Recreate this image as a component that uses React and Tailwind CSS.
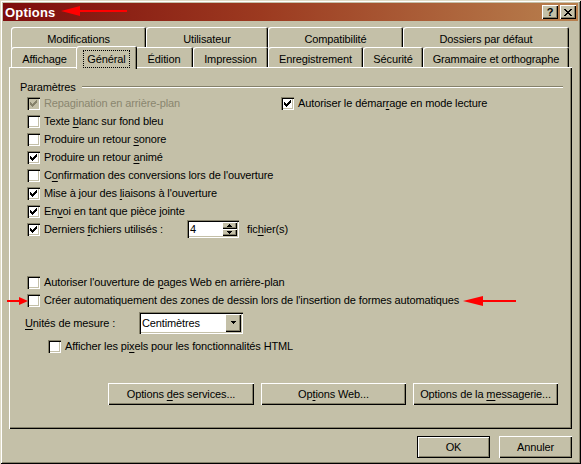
import React from 'react';

const raised = 'shadow-[inset_1px_1px_0_#fff,inset_-1px_-1px_0_#000,inset_-2px_-2px_0_#85816a]';
const sunken = 'shadow-[inset_1px_1px_0_#85816a,inset_2px_2px_0_#000,inset_-1px_-1px_0_#fff,inset_-2px_-2px_0_#c4c0a8]';

const U = ({ children }) => <span className="underline underline-offset-[2px]">{children}</span>;

const Check = ({ disabled }) => (
  <svg width="7" height="7" viewBox="0 0 7 7" shapeRendering="crispEdges" className="block">
    <path
      d="M0 2h1v3h-1zM1 3h1v3h-1zM2 4h1v3h-1zM3 3h1v3h-1zM4 2h1v3h-1zM5 1h1v3h-1zM6 0h1v3h-1z"
      fill={disabled ? '#85816a' : '#000'}
    />
  </svg>
);

const Box = ({ checked, disabled }) => (
  <span
    className={`w-[13px] h-[13px] shrink-0 flex items-center justify-center ${sunken} ${
      disabled ? 'bg-[#c4c0a8]' : 'bg-white'
    }`}
  >
    {checked && <Check disabled={disabled} />}
  </span>
);

const Row = ({ checked, disabled, children, className = '' }) => (
  <div className={`h-[18px] flex items-center gap-[4px] ${className}`}>
    <Box checked={checked} disabled={disabled} />
    <span className={disabled ? 'text-[#8a866f]' : 'text-black'}>{children}</span>
  </div>
);

const Btn = ({ children, className = '' }) => (
  <div className={`h-[22px] flex items-center justify-center bg-[#c4c0a8] ${raised} ${className}`}>
    <span>{children}</span>
  </div>
);

const Arrow = ({ dir }) => (
  <svg width="5" height="4" viewBox="0 0 5 4" shapeRendering="crispEdges" className="block">
    {dir === 'up' ? <path d="M2 0h1v1h1v1h1v1h-5v-1h1v-1h1z" /> : <path d="M0 0h5v1h-1v1h-1v1h-1v-1h-1v-1h-1z" />}
  </svg>
);

const backTabs = [
  { label: 'Modifications', w: 'w-[135px]' },
  { label: 'Utilisateur', w: 'w-[122px]' },
  { label: 'Compatibilité', w: 'w-[135px]' },
  { label: 'Dossiers par défaut', w: 'w-[166px]' },
];

const frontTabs = [
  { label: 'Affichage', w: 'w-[67px]' },
  { label: 'Général', w: 'w-[61px]', active: true },
  { label: 'Édition', w: 'w-[58px]' },
  { label: 'Impression', w: 'w-[75px]' },
  { label: 'Enregistrement', w: 'w-[95px]' },
  { label: 'Sécurité', w: 'w-[60px]' },
  { label: 'Grammaire et orthographe', w: 'w-[146px]' },
];

const tabShape =
  'rounded-tl-[3px] rounded-tr-[2px] shadow-[inset_1px_1px_0_#fff,inset_-1px_0_0_#000,inset_-2px_0_0_#85816a]';

export default function App() {
  return (
    <div className="relative w-[581px] h-[464px] bg-[#c4c0a8] p-[3px] text-[11px] leading-none tracking-[-0.12px] text-black font-['Liberation_Sans',Arial,sans-serif] shadow-[inset_1px_1px_0_#dfdbc6,inset_-1px_-1px_0_#000,inset_2px_2px_0_#fff,inset_-2px_-2px_0_#85816a] select-none">
      {/* Title bar */}
      <div className="h-[18px] flex items-center justify-between pl-[2px] pr-[2px] bg-[linear-gradient(90deg,#7e0c0c,#9c3a20_45%,#b8804e)]">
        <span className="text-white font-bold text-[13px] tracking-[0.2px]">Options</span>
        <div className="flex gap-[2px]">
          <div className={`w-[16px] h-[14px] flex items-center justify-center bg-[#c4c0a8] font-bold text-[11px] ${raised}`}>
            ?
          </div>
          <div className={`w-[16px] h-[14px] flex items-center justify-center bg-[#c4c0a8] ${raised}`}>
            <svg width="8" height="7" viewBox="0 0 8 7" shapeRendering="crispEdges">
              <path d="M0 0h2l2 2.5 2-2.5h2l-3 3.5 3 3.5h-2l-2-2.5-2 2.5h-2l3-3.5z" />
            </svg>
          </div>
        </div>
      </div>

      <div className="px-[6px] pt-[6px]">
        {/* Tab rows */}
        <div className="flex pl-[2px] h-[20px]">
          {backTabs.map((t) => (
            <div key={t.label} className={`${t.w} h-[22px] flex items-start justify-center pt-[7px] bg-[#c4c0a8] ${tabShape}`}>
              {t.label}
            </div>
          ))}
        </div>
        <div className="relative z-10 flex items-end pl-[2px] h-[20px]">
          {frontTabs.map((t) =>
            t.active ? (
              <div
                key={t.label}
                className={`${t.w} -mx-[2px] h-[23px] -mb-[2px] relative z-10 flex items-start justify-center pt-[4px] bg-[#c4c0a8] ${tabShape}`}
              >
                <span className="border border-dotted border-black px-[3px] pt-[3px] pb-[2px]">{t.label}</span>
              </div>
            ) : (
              <div key={t.label} className={`${t.w} h-[20px] flex items-start justify-center pt-[7px] bg-[#c4c0a8] ${tabShape}`}>
                {t.label}
              </div>
            )
          )}
        </div>

        {/* Panel */}
        <div className={`h-[362px] bg-[#c4c0a8] pl-[11px] pr-[9px] pt-[13px] ${raised}`}>
          <div className="flex items-center h-[14px]">
            <span>Paramètres</span>
            <div className="ml-[6px] flex-1 border-t border-t-[#85816a] border-b border-b-white" />
          </div>

          <div className="ml-[7px]">
            <div className="flex">
              <Row checked disabled className="w-[254px]">
                Repagination en arrière-plan
              </Row>
              <Row checked>
                Autoriser le démar<U>r</U>age en mode lecture
              </Row>
            </div>
            <Row>
              Texte <U>b</U>lanc sur fond bleu
            </Row>
            <Row>
              Produire un retour <U>s</U>onore
            </Row>
            <Row checked>
              Produire un retour <U>a</U>nimé
            </Row>
            <Row>
              C<U>o</U>nfirmation des conversions lors de l'ouverture
            </Row>
            <Row checked>
              Mise à jour des <U>l</U>iaisons à l'ouverture
            </Row>
            <Row checked>
              En<U>v</U>oi en tant que pièce jointe
            </Row>
            <div className="flex items-center h-[18px]">
              <Row checked className="w-[160px]">
                Derniers <U>f</U>ichiers utilisés :
              </Row>
              <div className={`w-[52px] h-[18px] flex bg-white ${sunken} p-[2px]`}>
                <span className="flex-1 pl-[1px] pt-[2px]">4</span>
                <div className="w-[15px] flex flex-col">
                  <div className={`flex-1 flex items-center justify-center bg-[#c4c0a8] ${raised}`}>
                    <Arrow dir="up" />
                  </div>
                  <div className={`flex-1 flex items-center justify-center bg-[#c4c0a8] ${raised}`}>
                    <Arrow dir="down" />
                  </div>
                </div>
              </div>
              <span className="ml-[8px]">
                fic<U>h</U>ier(s)
              </span>
            </div>

            <Row className="mt-[35px]">
              Autoriser l'ouverture de <U>p</U>ages Web en arrière-plan
            </Row>
            <Row>Créer automatiquement des zones de dessin lors de l'insertion de formes automatiques</Row>
          </div>

          <div className="mt-[3px] flex items-center h-[22px] ml-[5px]">
            <span className="w-[114px]">
              <U>U</U>nités de mesure :
            </span>
            <div className={`w-[104px] h-[22px] flex bg-white ${sunken} p-[2px]`}>
              <span className="flex-1 flex items-center pl-[1px]">Centimètres</span>
              <div className={`w-[16px] flex items-center justify-center bg-[#c4c0a8] ${raised}`}>
                <Arrow dir="down" />
              </div>
            </div>
          </div>

          <Row className="mt-[3px] ml-[28px]">
            Afficher les pi<U>x</U>els pour les fonctionnalités HTML
          </Row>

          <div className="mt-[28px] mr-[5px] flex justify-end gap-[7px]">
            <Btn className="w-[146px]">
              Options <U>d</U>es services...
            </Btn>
            <Btn className="w-[145px]">
              Op<U>t</U>ions Web...
            </Btn>
            <Btn className="w-[145px]">
              Options de la <U>m</U>essagerie...
            </Btn>
          </div>
        </div>

        {/* Dialog buttons */}
        <div className="mt-[7px] flex justify-end gap-[9px]">
          <div className="w-[73px] h-[22px] flex items-center justify-center border border-black bg-[#c4c0a8] shadow-[inset_1px_1px_0_#fff,inset_-1px_-1px_0_#85816a]">
            OK
          </div>
          <Btn className="w-[73px]">Annuler</Btn>
        </div>
      </div>

      {/* Red annotation arrows */}
      <svg className="absolute inset-0 pointer-events-none" width="581" height="464" viewBox="0 0 581 464">
        <g fill="#f00" stroke="#f00">
          <line x1="78" y1="11" x2="127" y2="11" strokeWidth="2" />
          <polygon points="61,11 80,6 80,16" stroke="none" />
          <line x1="145" y1="58" x2="209" y2="58" strokeWidth="2" />
          <polygon points="128,58 147,53 147,63" stroke="none" />
          <line x1="7" y1="301" x2="22" y2="301" strokeWidth="2" />
          <polygon points="28,301 19,297 19,305" stroke="none" />
          <line x1="481" y1="301" x2="516" y2="301" strokeWidth="2" />
          <polygon points="463,301 483,296 483,306" stroke="none" />
        </g>
      </svg>
    </div>
  );
}
